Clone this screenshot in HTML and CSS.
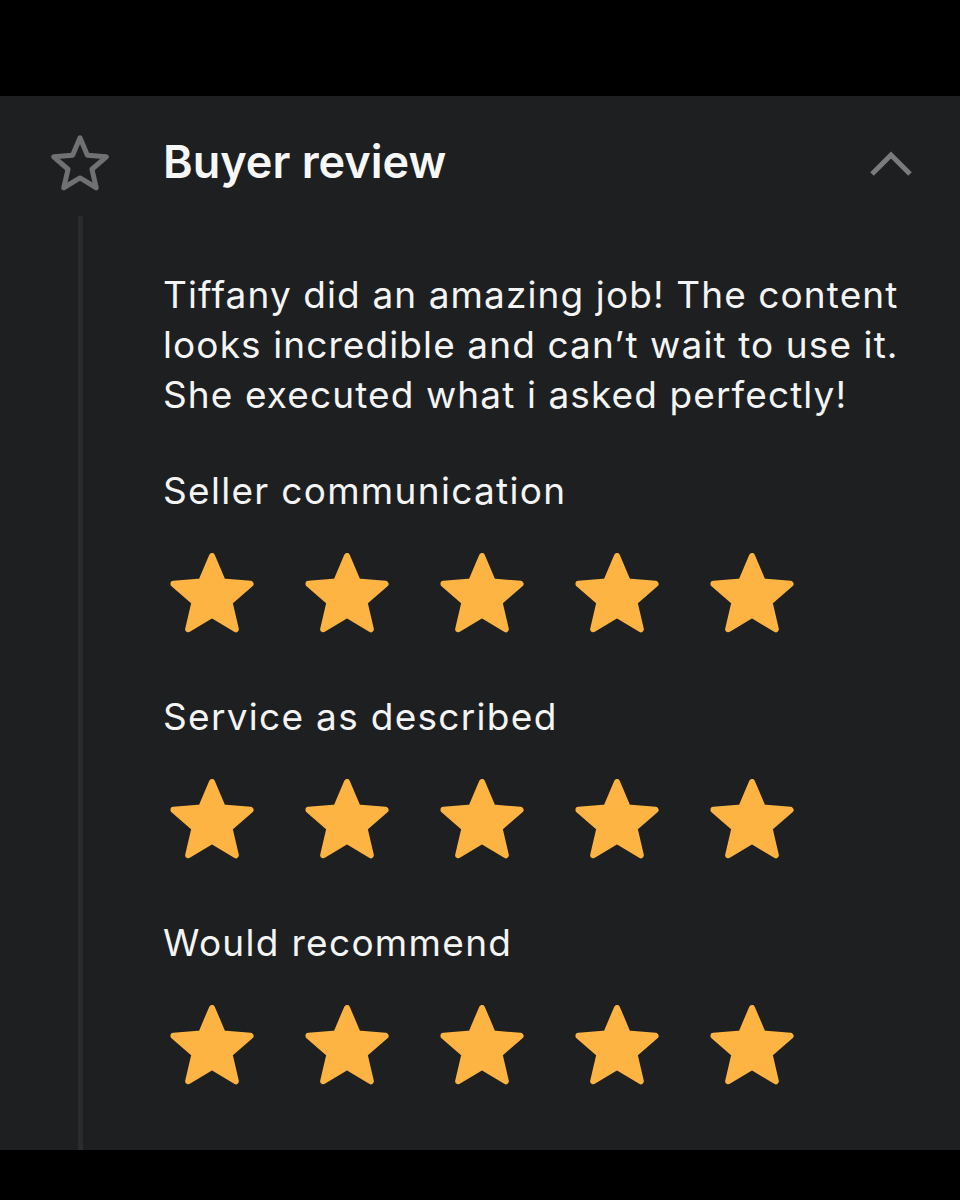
FILE: index.html
```html
<!DOCTYPE html>
<html lang="en">
<head>
<meta charset="utf-8">
<title>Buyer review</title>
<link rel="stylesheet" href="styles.css">
</head>
<body>
<div class="screen">
  <div class="topbar"></div>
  <section class="panel">
    <header class="panel-head">
      <div class="head-icon">
        <svg width="60" height="57" viewBox="0.6 0.6 22.8 21.6" aria-hidden="true">
          <path d="M12 17.27L18.18 21l-1.64-7.03L22 9.24l-7.19-.61L12 2 9.19 8.63 2 9.24l5.46 4.73L5.82 21z" fill="none" stroke="#707173" stroke-width="1.9" stroke-linejoin="round"/>
        </svg>
      </div>
      <h2 class="title">Buyer review</h2>
      <svg class="chevron" width="46" height="28" viewBox="0 0 46 28" aria-hidden="true">
        <polyline points="4,24 23,5 42,24" fill="none" stroke="#7a7b7d" stroke-width="5"/>
      </svg>
    </header>
    <div class="panel-body">
      <div class="rail"></div>
      <div class="content">
        <p class="review">Tiffany did an amazing job! The content looks incredible and can’t wait to use it. She executed what i asked perfectly!</p>

        <div class="rating">
          <div class="label">Seller communication</div>
          <div class="stars">
            <svg class="star" viewBox="1 1.2 22 20.8"><use href="#s"/></svg>
            <svg class="star" viewBox="1 1.2 22 20.8"><use href="#s"/></svg>
            <svg class="star" viewBox="1 1.2 22 20.8"><use href="#s"/></svg>
            <svg class="star" viewBox="1 1.2 22 20.8"><use href="#s"/></svg>
            <svg class="star" viewBox="1 1.2 22 20.8"><use href="#s"/></svg>
          </div>
        </div>

        <div class="rating">
          <div class="label">Service as described</div>
          <div class="stars">
            <svg class="star" viewBox="1 1.2 22 20.8"><use href="#s"/></svg>
            <svg class="star" viewBox="1 1.2 22 20.8"><use href="#s"/></svg>
            <svg class="star" viewBox="1 1.2 22 20.8"><use href="#s"/></svg>
            <svg class="star" viewBox="1 1.2 22 20.8"><use href="#s"/></svg>
            <svg class="star" viewBox="1 1.2 22 20.8"><use href="#s"/></svg>
          </div>
        </div>

        <div class="rating">
          <div class="label">Would recommend</div>
          <div class="stars">
            <svg class="star" viewBox="1 1.2 22 20.8"><use href="#s"/></svg>
            <svg class="star" viewBox="1 1.2 22 20.8"><use href="#s"/></svg>
            <svg class="star" viewBox="1 1.2 22 20.8"><use href="#s"/></svg>
            <svg class="star" viewBox="1 1.2 22 20.8"><use href="#s"/></svg>
            <svg class="star" viewBox="1 1.2 22 20.8"><use href="#s"/></svg>
          </div>
        </div>
      </div>
    </div>
  </section>
  <div class="bottombar"></div>
</div>
<svg width="0" height="0" class="defs" aria-hidden="true">
  <defs>
    <path id="s" d="M12 17.27L18.18 21l-1.64-7.03L22 9.24l-7.19-.61L12 2 9.19 8.63 2 9.24l5.46 4.73L5.82 21z" fill="#fdb443" stroke="#fdb443" stroke-width="1.6" stroke-linejoin="round"/>
  </defs>
</svg>
</body>
</html>
```

FILE: styles.css
```css
* { box-sizing: border-box; }
html, body { margin: 0; padding: 0; background: #000; }
body {
  width: 960px;
  height: 1200px;
  overflow: hidden;
  font-family: "Inter", "Liberation Sans", sans-serif;
  color: #fff;
}
.screen {
  display: flex;
  flex-direction: column;
  height: 1200px;
}
.topbar { height: 96px; background: #000; flex: none; }
.bottombar { height: 50px; background: #000; flex: none; }
.panel {
  flex: 1;
  display: flex;
  flex-direction: column;
  background: #1e1f21;
}
.panel-head {
  display: flex;
  align-items: flex-start;
  height: 120px;
  padding: 36px 46px 0 50px;
}
.head-icon { width: 113px; height: 60px; display: flex; align-items: center; flex: none; }
.title {
  margin: 0;
  flex: 1;
  font-size: 45px;
  font-weight: 600;
  line-height: 60px;
  color: #f7f7f7;
}
.chevron { margin-top: 18px; flex: none; }
.panel-body {
  flex: 1;
  display: flex;
}
.rail {
  width: 5px;
  margin-left: 78px;
  background: #2a2b2d;
  flex: none;
}
.content {
  margin-left: 80px;
  padding-top: 54px;
  flex: 1;
}
.review {
  margin: 0;
  width: 772px;
  font-size: 37px;
  letter-spacing: 1.1px;
  line-height: 50px;
  color: #f4f4f4;
}
.rating { margin-top: 46px; }
.rating + .rating { margin-top: 59px; }
.label {
  font-size: 37px;
  letter-spacing: 1.3px;
  line-height: 50px;
  color: #f4f4f4;
}
.stars {
  display: flex;
  gap: 47px;
  margin-top: 37px;
  padding-left: 5px;
}
.star { width: 88px; height: 80px; display: block; }
.defs { position: absolute; }
```
